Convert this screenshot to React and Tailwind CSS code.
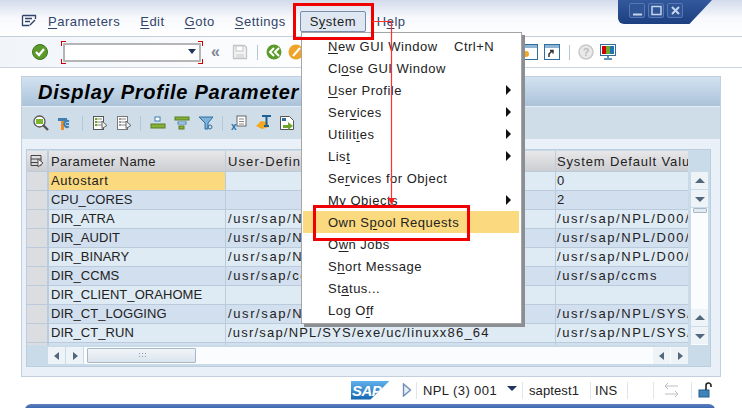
const rows = [
  ["Autostart", "", "0"],
  ["CPU_CORES", "", "2"],
  ["DIR_ATRA", "/usr/sap/NPL/D00/data", "/usr/sap/NPL/D00/data"],
  ["DIR_AUDIT", "/usr/sap/NPL/D00/log", "/usr/sap/NPL/D00/log"],
  ["DIR_BINARY", "/usr/sap/NPL/D00/exe", "/usr/sap/NPL/D00/exe"],
  ["DIR_CCMS", "/usr/sap/ccms", "/usr/sap/ccms"],
  ["DIR_CLIENT_ORAHOME", "", ""],
  ["DIR_CT_LOGGING", "/usr/sap/NPL/SYS/global", "/usr/sap/NPL/SYS/global"],
  ["DIR_CT_RUN", "/usr/sap/NPL/SYS/exe/uc/linuxx86_64", "/usr/sap/NPL/SYS/exe"],
  ["", "", ""],
];

const menuItems = [
  { pre: "", key: "N", post: "ew GUI Window", hint: "Ctrl+N" },
  { pre: "Cl", key: "o", post: "se GUI Window" },
  { pre: "", key: "U", post: "ser Profile", sub: true },
  { pre: "Ser", key: "v", post: "ices", sub: true },
  { pre: "Utilit", key: "i", post: "es", sub: true },
  { pre: "Lis", key: "t", post: "", sub: true },
  { pre: "Se", key: "r", post: "vices for Object" },
  { pre: "My Ob", key: "j", post: "ects", sub: true },
  { pre: "Own S", key: "p", post: "ool Requests", active: true },
  { pre: "O", key: "w", post: "n Jobs" },
  { pre: "S", key: "h", post: "ort Message" },
  { pre: "St", key: "a", post: "tus..." },
  { pre: "Log O", key: "f", post: "f" },
];

function MenuLabel({ pre, k, post }) {
  return (
    <span className="tracking-[0.5px]">
      {pre}<u className="underline-offset-2">{k}</u>{post}
    </span>
  );
}

function Sep() {
  return <span className="block w-px h-[15px] bg-[#b4c8da]" />;
}

function BarSep({ className = "" }) {
  return <span className={`w-px h-[17px] bg-[#dfe5ec] ${className}`} />;
}

function Ico({ children, className = "" }) {
  return (
    <svg width="16" height="16" viewBox="0 0 16 16" className={`shrink-0 ${className}`}>
      {children}
    </svg>
  );
}

function Window({ children }) {
  return (
    <Ico>
      <rect x="0.500" y="0.500" width="15" height="15" fill="#fff" stroke="#2f6f9f" />
      <rect x="1" y="1" width="14" height="3" fill="#8db4d2" />
      {children}
    </Ico>
  );
}

function GridHeadIcon() {
  return (
    <Ico>
      <path d="M2 2.500h10v10H2zM2 6h10M2 9.500h10" fill="none" stroke="#444" strokeWidth="1" />
      <path d="M9 6l5 4-5 4z" fill="#f4f4f4" stroke="#555" />
    </Ico>
  );
}

function DocIcon({ green }) {
  return (
    <Ico>
      <rect x="1.500" y="1.500" width="10" height="13" fill="#fff" stroke={green ? "#555" : "#777"} />
      <path d="M3 4h2.500M3 7h2.500M3 10h2.500" stroke={green ? "#6fa52d" : "#999"} strokeWidth="2" />
      <path d="M6 4h4M6 7h4M6 10h4" stroke="#888" />
      <path d="M10 6l5 4.500-5 3z" fill="#eee" stroke="#666" />
    </Ico>
  );
}

function ScrollBtn({ children }) {
  return (
    <span className="w-[17px] h-[17px] shrink-0 bg-[#eef3f8] flex items-center justify-center">{children}</span>
  );
}

function Tri({ dir }) {
  const d = {
    left: "M7 1v8L2 5z",
    right: "M3 1v8l5-4z",
    up: "M5 2l5 5H0z",
    down: "M0 3h10L5 8z",
  }[dir];
  return (
    <svg width="10" height="10" viewBox="0 0 10 10">
      <path d={d} fill="#53677c" />
    </svg>
  );
}

export default function App() {
  return (
    <div
      className="relative w-[742px] h-[408px] overflow-hidden bg-white text-[13px] leading-[19px] text-[#222]"
      style={{ fontFamily: '"Liberation Sans", Arial, sans-serif' }}
    >
      {/* menu bar */}
      <div className="h-[37px] flex items-center pl-[21px] pt-[6px] gap-[20px] bg-gradient-to-b from-[#d3dbeb] via-[#f7f9fc] to-white border-b border-[#c5cfdb] text-[#33446a]">
        <Ico className="mr-[-9px]">
          <path d="M1.500 2.500h13v3.500M1.500 2.500v10h7M4 5.500h7M4 8.500h5" fill="none" stroke="#33446a" strokeWidth="1.300" />
          <path d="M9 12l5-5" stroke="#33446a" strokeWidth="1.500" />
        </Ico>
        <MenuLabel pre="" k="P" post="arameters" />
        <MenuLabel pre="" k="E" post="dit" />
        <MenuLabel pre="" k="G" post="oto" />
        <MenuLabel pre="" k="S" post="ettings" />
        <span className="w-[66px] h-[21px] -ml-[6px] -mr-[9px] flex items-center justify-center bg-[#dfe7f2] border border-[#7a8ba8] rounded-[2px] text-[#222]">
          <MenuLabel pre="S" k="y" post="stem" />
        </span>
        <MenuLabel pre="H" k="e" post="lp" />
      </div>

      {/* standard toolbar */}
      <div className="h-[31px] flex items-center border-b border-[#ccd4df] bg-gradient-to-r from-[#f1f5fa] via-white to-white">
        <Ico className="ml-[32px]">
          <circle cx="8" cy="8" r="7.500" fill="#5c9a2c" stroke="#41761d" />
          <path d="M4 8l3 3 5-6" fill="none" stroke="#fff" strokeWidth="2.200" />
        </Ico>
        <div className="relative ml-[13px] w-[142px] h-[23px] flex items-center justify-end pr-[5px]">
          <div className="absolute inset-x-[2px] inset-y-[2px] border-2 border-[#b5b5b5] bg-white rounded-[1px]" />
          <span className="absolute left-0 top-0 w-[5px] h-[5px] border-l border-t border-[#d40000]" />
          <span className="absolute right-0 top-0 w-[5px] h-[5px] border-r border-t border-[#d40000]" />
          <span className="absolute left-0 bottom-0 w-[5px] h-[5px] border-l border-b border-[#d40000]" />
          <span className="absolute right-0 bottom-0 w-[5px] h-[5px] border-r border-b border-[#d40000]" />
          <svg width="10" height="6" viewBox="0 0 10 6" className="relative mr-[1px]">
            <path d="M1 0h8L5 5z" fill="#1f3560" />
          </svg>
        </div>
        <span className="ml-[8px] w-[12px] text-[#7b8490] text-[16px] font-bold leading-none">«</span>
        <Ico className="ml-[9px]">
          <path d="M1.500 1.500h11l2 2v11h-13z" fill="#f3f3f3" stroke="#c4c4c4" strokeWidth="1.300" />
          <rect x="4" y="2" width="7" height="5" fill="#fff" stroke="#c4c4c4" />
          <rect x="4" y="10" width="8" height="4" fill="#ddd" />
        </Ico>
        <span className="ml-[9px]"><Sep /></span>
        <Ico className="ml-[8px]">
          <circle cx="8" cy="8" r="7.500" fill="#5c9a2c" />
          <path d="M8 4L4 8l4 4M13 4L9 8l4 4" fill="none" stroke="#fff" strokeWidth="2" />
        </Ico>
        <Ico className="ml-[6px]">
          <circle cx="8" cy="8" r="7.500" fill="#f0a326" />
          <path d="M5 12l7-8" stroke="#fff" strokeWidth="2" />
        </Ico>
        <div className="ml-[218px] flex items-center">
          <Window>
            <circle cx="4" cy="10" r="3" fill="#f2a71f" />
          </Window>
          <span className="ml-[6px]">
            <Window>
              <path d="M5 13v-3l3-3M6 6.500h3v3" fill="none" stroke="#333" strokeWidth="1.500" />
            </Window>
          </span>
          <span className="ml-[9px]"><Sep /></span>
          <Ico className="ml-[8px]">
            <circle cx="8" cy="8" r="7" fill="#e9e9e9" stroke="#c9c9c9" strokeWidth="1.500" />
            <text x="8" y="12" textAnchor="middle" fontSize="11" fontWeight="700" fill="#bdbdbd" fontFamily="Liberation Sans">?</text>
          </Ico>
          <Ico className="ml-[6px]">
            <rect x="0.500" y="0.500" width="15" height="11" fill="#fff" stroke="#2f6f9f" />
            <rect x="2" y="2" width="4" height="8" fill="#d00000" />
            <rect x="6" y="2" width="4" height="8" fill="#72a82c" />
            <rect x="10" y="2" width="4" height="8" fill="#1f76b5" />
            <path d="M8 12v2M4 15h8" stroke="#2f6f9f" strokeWidth="1.500" />
          </Ico>
        </div>
      </div>

      {/* main panel */}
      <div className="mx-[21px] mt-[8px] w-[700px] h-[301px] border border-[#c3cfdc] bg-[#e9f0f7] flex flex-col">
        <div className="h-[30px] shrink-0 pl-[16px] pt-px flex items-center bg-gradient-to-b from-[#d2e2f0] to-[#abc3da] border-b border-[#e3edf5] overflow-hidden">
          <h1 className="text-[20px] font-bold italic tracking-[0.75px] text-black whitespace-nowrap">
            Display Profile Parameter
          </h1>
        </div>
        <div className="h-[32px] shrink-0 flex items-center bg-[#cfdde8] pl-[11px]">
          <Ico>
            <circle cx="6.500" cy="6.500" r="5.500" fill="#fff" stroke="#555" strokeWidth="1.300" />
            <rect x="3" y="4" width="7" height="5" fill="#7ab52f" />
            <path d="M10 10l5 5" stroke="#555" strokeWidth="2.400" />
          </Ico>
          <Ico className="ml-[8px]">
            <path d="M1 3h9v3H1z" fill="#3f7fb2" />
            <path d="M4 6h3v9H4z" fill="#f08a1d" />
            <path d="M9 9h3M12 6.500a3 3 0 1 0 0 5" fill="none" stroke="#3f7fb2" strokeWidth="2" />
          </Ico>
          <span className="ml-[9px]"><Sep /></span>
          <span className="ml-[9px]"><DocIcon green /></span>
          <span className="ml-[8px]"><DocIcon /></span>
          <span className="ml-[8px]"><Sep /></span>
          <Ico className="ml-[9px]">
            <rect x="5" y="2" width="5" height="4" fill="#fff" stroke="#3f7fb2" />
            <rect x="1" y="9" width="14" height="4" fill="#84b13c" stroke="#587e20" />
          </Ico>
          <Ico className="ml-[8px]">
            <rect x="1" y="2" width="14" height="3" fill="#84b13c" stroke="#587e20" />
            <rect x="4" y="7" width="8" height="2" fill="#fff" stroke="#3f7fb2" />
            <rect x="5" y="11" width="5" height="3" fill="#84b13c" stroke="#587e20" />
          </Ico>
          <Ico className="ml-[8px]">
            <path d="M1 2h14L10 8v6H7V8z" fill="#7eb2d9" stroke="#2f6f9f" />
            <circle cx="12" cy="12" r="2" fill="none" stroke="#2f6f9f" />
          </Ico>
          <span className="ml-[8px]"><Sep /></span>
          <Ico className="ml-[8px]">
            <rect x="6" y="1" width="9" height="10" fill="#fff" stroke="#666" />
            <path d="M8 4h5M8 6.500h5M8 9h5" stroke="#888" />
            <text x="0" y="15" fontSize="10" fontWeight="700" fill="#1f6fa8" fontFamily="Liberation Sans">x</text>
          </Ico>
          <Ico className="ml-[9px]">
            <path d="M0 11l5-5 6 1 2 5-7 2z" fill="#f3a81f" />
            <path d="M6 1h9M10.500 1v10M8 11h5" stroke="#1f5f92" strokeWidth="2" fill="none" />
          </Ico>
          <Ico className="ml-[7px]">
            <path d="M1.500 1.500h9l4 4v9h-13z" fill="#fff" stroke="#555" />
            <rect x="3" y="3" width="4" height="3" fill="#2f6f9f" />
            <path d="M4 10h5V7l5 4-5 4v-2H4z" fill="#6fa52d" />
          </Ico>
        </div>

        {/* grid */}
        <div className="mt-[10px] mx-[4px] w-[685px] h-[218px] bg-[#c9dae9] border border-[#bccddd] flex flex-col">
          <div className="flex h-[195px] shrink-0">
            <div className="w-[661px] pt-px flex flex-col overflow-hidden">
              <div className="h-[20px] shrink-0 flex gap-px bg-[#bdcbdc] leading-[21px]">
                <div className="w-[20px] flex items-center justify-center bg-gradient-to-b from-[#e8e8ea] to-[#cdced2]">
                  <GridHeadIcon />
                </div>
                <div className="w-[176px] ml-px pl-[2px] bg-gradient-to-b from-[#e8e8ea] to-[#cdced2] tracking-[0.43px]">Parameter Name</div>
                <div className="w-[329px] pl-[2px] bg-gradient-to-b from-[#e8e8ea] to-[#cdced2] tracking-[1.1px]">User-Defined Value</div>
                <div className="flex-1 pl-px bg-gradient-to-b from-[#e8e8ea] to-[#cdced2] tracking-[0.85px] whitespace-nowrap overflow-hidden">System Default Value</div>
              </div>
              {rows.map((r, i) => (
                <div key={i} className="h-[19px] shrink-0 flex gap-px border-t border-[#bccbdc] bg-[#bccbdc] leading-[18px]">
                  <div className="w-[20px] mr-px bg-[#dcdde1]" />
                  <div className={`w-[176px] pl-[2px] ${i === 0 ? "bg-[#fbd97f] tracking-[0.6px]" : i % 2 ? "bg-[#d2dfef] tracking-[0.05px]" : "bg-[#deeaf4] tracking-[0.05px]"}`}>{r[0]}</div>
                  <div className={`w-[329px] pl-[2px] whitespace-nowrap overflow-hidden ${i === 8 ? "tracking-[1.2px]" : "tracking-[1.6px]"} ${i % 2 ? "bg-[#d2dfef]" : "bg-[#deeaf4]"}`}>{r[1]}</div>
                  <div className={`flex-1 min-w-0 pl-px tracking-[1.6px] whitespace-nowrap overflow-hidden ${i % 2 ? "bg-[#d2dfef]" : "bg-[#deeaf4]"}`}>{r[2]}</div>
                </div>
              ))}
            </div>
            {/* vertical scrollbar */}
            <div className="w-[18px] ml-[3px] mt-[22px] flex flex-col items-start">
              <ScrollBtn><Tri dir="up" /></ScrollBtn>
              <span className="h-px" />
              <ScrollBtn><Tri dir="down" /></ScrollBtn>
              <div className="mt-px w-[17px] flex-1 bg-[#fbfcfd]">
                <div className="mx-auto w-[14px] h-[5px] bg-[#e3eaf1] border border-[#a9b8c7] rounded-[1px]" />
                <div className="h-[96px]" />
                <ScrollBtn><Tri dir="up" /></ScrollBtn>
                <div className="h-px bg-[#c9dae9]" />
                <ScrollBtn><Tri dir="down" /></ScrollBtn>
              </div>
            </div>
          </div>
          {/* horizontal scrollbar */}
          <div className="h-[21px] shrink-0 flex items-start pt-[2px] pl-[21px] pr-[22px]">
            <ScrollBtn><Tri dir="left" /></ScrollBtn>
            <span className="w-px" />
            <ScrollBtn><Tri dir="right" /></ScrollBtn>
            <div className="flex-1 h-[17px] ml-px bg-[#fbfcfd] flex items-center justify-between">
              <div className="w-[109px] h-[15px] ml-[3px] bg-gradient-to-b from-[#f1f5f9] to-[#dbe4ed] border border-[#a9b8c7] rounded-[1px] flex items-center justify-center">
                <span className="w-[8px] h-[7px] [background-image:radial-gradient(#8b9bab_0.7px,transparent_0.8px)] [background-size:3px_3px]" />
              </div>
              <div className="flex gap-px">
                <ScrollBtn><Tri dir="left" /></ScrollBtn>
                <ScrollBtn><Tri dir="right" /></ScrollBtn>
              </div>
            </div>
          </div>
        </div>
      </div>

      {/* status bar */}
      <div className="h-[26px] flex items-center pl-[351px]">
        <div className="w-[39px] h-[19px] bg-gradient-to-b from-[#5fb0ec] to-[#1266b0] [clip-path:polygon(0_0,100%_0,50%_100%,0_100%)] text-white font-bold italic text-[15px] leading-[19px] pl-[1px] tracking-[-0.5px]">SAP</div>
        <svg width="10" height="14" viewBox="0 0 10 14" className="ml-[12px]">
          <path d="M1.500 1l7 6-7 6z" fill="#e7edf5" stroke="#6f8fb8" strokeWidth="1.400" />
        </svg>
        <BarSep className="ml-[4px]" />
        <span className="ml-[6px] tracking-[0.4px]">NPL (3) 001</span>
        <svg width="10" height="6" viewBox="0 0 10 6" className="ml-[10px] mb-[3px]">
          <path d="M0 0h10L5 5z" fill="#1f3560" />
        </svg>
        <BarSep className="ml-[5px]" />
        <span className="ml-[6px] tracking-[0.1px]">saptest1</span>
        <BarSep className="ml-[11px]" />
        <span className="ml-[4px] tracking-[0.3px]">INS</span>
        <BarSep className="ml-[9px]" />
        <BarSep className="ml-[25px]" />
        <Ico className="ml-[10px]">
          <path d="M1 4h13M1 12h13M4 1L1 4l3 3M11 9l3 3-3 3" fill="none" stroke="#b9bfc6" />
        </Ico>
        <BarSep className="ml-[11px]" />
        <Ico className="ml-[6px]">
          <rect x="1" y="8" width="10" height="7" fill="#3f83b8" stroke="#1f5f92" />
          <path d="M8 8V3.500a2.500 2.500 0 0 1 5 0V5" fill="none" stroke="#222" strokeWidth="1.600" />
        </Ico>
      </div>
      <div className="absolute left-[25px] -bottom-[2px] w-[690px] h-[6px] rounded-t-[7px] bg-gradient-to-b from-[#5e80c0] to-[#2d5aa6]" />

      {/* window controls */}
      <div className="absolute left-[618px] top-0 w-[94px] h-[24px] pl-[11px] pt-[2px] flex gap-[3px] bg-gradient-to-b from-[#33589c] to-[#1c3f80] rounded-bl-[6px] [clip-path:polygon(0_0,100%_0,76%_100%,0_100%)]">
        {[0, 1, 2].map((i) => (
          <span key={i} className="w-[16px] h-[15px] mt-px bg-[#2f5596] border border-[#5778b2] rounded-[2px] flex items-center justify-center text-[#c5d5ee]">
            <svg width="11" height="11" viewBox="0 0 11 11">
              {i === 0 && <path d="M1 9.500h9" stroke="currentColor" strokeWidth="2" />}
              {i === 1 && <rect x="1" y="1.500" width="9" height="8" fill="none" stroke="currentColor" strokeWidth="1.500" />}
              {i === 2 && <path d="M2 2l7 7M9 2l-7 7" stroke="currentColor" strokeWidth="2" />}
            </svg>
          </span>
        ))}
      </div>

      {/* System dropdown */}
      <div className="absolute left-[301px] top-[32px] w-[221px] h-[292px] bg-white border border-[#a5a5a5] pt-[2px] pl-px pr-[2px] shadow-[3px_3px_0_#8b8f94] text-[#222]">
        {menuItems.map((m) => (
          <div key={m.pre + m.key} className={`relative h-[22px] flex items-center pl-[25px] whitespace-nowrap ${m.active ? "bg-[#fbd97f]" : ""}`}>
            <MenuLabel pre={m.pre} k={m.key} post={m.post} />
            {m.hint && <span className="absolute left-[151px] tracking-[0.5px]">{m.hint}</span>}
            {m.sub && (
              <svg width="6" height="10" viewBox="0 0 6 10" className="absolute left-[203px]">
                <path d="M0 0l5 5-5 5z" fill="#111" />
              </svg>
            )}
          </div>
        ))}
      </div>

      {/* red callouts drawn over the screenshot */}
      <div className="absolute left-[293px] top-[3px] w-[81px] h-[37px] border-[3px] border-[#f00000]" />
      <div className="absolute left-[313px] top-[205px] w-[157px] h-[36px] border-[3px] border-[#f00000]" />
      <svg width="30" height="190" viewBox="0 0 30 190" className="absolute left-[372px] top-[18px]">
        <path d="M0 3.500h19.500V184" fill="none" stroke="#ff3030" strokeWidth="1.200" />
        <path d="M16 180h7l-3.500 7z" fill="#ff2020" />
      </svg>
    </div>
  );
}
